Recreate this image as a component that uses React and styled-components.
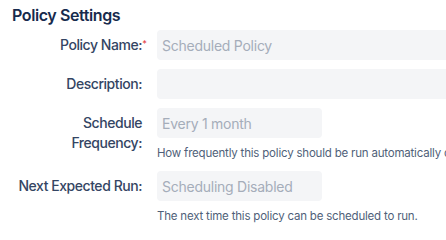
import React from "react";
import styled, { createGlobalStyle } from "styled-components";

const GlobalStyle = createGlobalStyle`
  html, body {
    margin: 0;
    padding: 0;
    overflow: hidden;
    background: #ffffff;
    font-family: Inter, "Noto Sans", sans-serif;
  }
`;

const Page = styled.div`
  padding: 3px 12px 0 12px;
  width: 700px;
`;

const Title = styled.h2`
  margin: 0 0 3px 0;
  font-size: 16px;
  line-height: 24px;
  font-weight: 600;
  letter-spacing: -0.4px;
  color: #172b4d;
`;

const Form = styled.div`
  display: flex;
  flex-direction: column;
  gap: 9px;
`;

const Row = styled.div`
  display: grid;
  grid-template-columns: 130px 1fr;
  column-gap: 15px;
  align-items: start;
`;

const Label = styled.label`
  padding-top: 5px;
  font-size: 14px;
  line-height: 20px;
  font-weight: 500;
  letter-spacing: -0.45px;
  color: #344563;
  text-align: right;
  position: relative;
`;

const Required = styled.span`
  position: absolute;
  right: -5px;
  top: 9px;
  color: #e5484d;
  font-size: 9px;
  line-height: 10px;
  letter-spacing: 0;
`;

const Field = styled.div`
  display: flex;
  flex-direction: column;
`;

const Input = styled.input`
  box-sizing: border-box;
  width: ${(p) => (p.$wide ? "420px" : "165px")};
  height: 30px;
  padding: 0 5px;
  border: none;
  border-radius: 4px;
  background: #f4f5f7;
  font-family: inherit;
  font-size: 14px;
  letter-spacing: -0.25px;
  color: #172b4d;
  outline: none;

  &::placeholder {
    color: #a5adba;
  }
`;

const Help = styled.div`
  margin-top: 6px;
  font-size: 11.5px;
  line-height: 18px;
  letter-spacing: -0.2px;
  color: #505f79;
  white-space: nowrap;
`;

const fields = [
  { label: "Policy Name:", required: true, placeholder: "Scheduled Policy", wide: true },
  { label: "Description:", placeholder: "", wide: true },
  {
    label: "Schedule Frequency:",
    placeholder: "Every 1 month",
    help: "How frequently this policy should be run automatically on a schedule.",
  },
  {
    label: "Next Expected Run:",
    placeholder: "Scheduling Disabled",
    help: "The next time this policy can be scheduled to run.",
  },
];

export default function App() {
  return (
    <>
      <GlobalStyle />
      <Page>
        <Title>Policy Settings</Title>
        <Form>
          {fields.map((f) => (
            <Row key={f.label}>
              <Label>
                {f.label}
                {f.required && <Required>*</Required>}
              </Label>
              <Field>
                <Input $wide={f.wide} placeholder={f.placeholder} disabled={!f.wide} />
                {f.help && <Help>{f.help}</Help>}
              </Field>
            </Row>
          ))}
        </Form>
      </Page>
    </>
  );
}
